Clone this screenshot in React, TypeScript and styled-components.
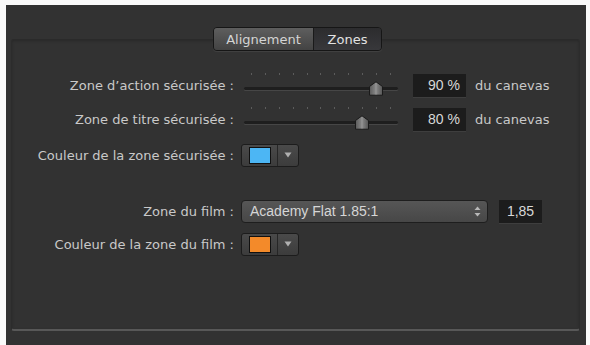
import styled, { createGlobalStyle } from 'styled-components';

const GlobalStyle = createGlobalStyle`
  html, body {
    margin: 0;
    padding: 0;
    background: #fafafa;
  }
  body {
    font-family: "Liberation Sans", Arial, Helvetica, sans-serif;
  }
`;

const Window = styled.div`
  margin: 5px 4px 0 6px;
  width: 580px;
  height: 340px;
  background: #323232;
  padding: 34px 6px 0 5px;
  box-sizing: border-box;
`;

const Panel = styled.div`
  position: relative;
  height: 292px;
  box-sizing: border-box;
  border-top: 1px solid #2a2a2a;
  border-left: 1px solid #2c2c2c;
  border-right: 1px solid #2c2c2c;
  border-bottom: 2px solid #585858;
  border-radius: 3px;
  background: #323232;
  box-shadow: inset 0 1px 3px rgba(0, 0, 0, 0.2);
  padding: 32px 0 0 0;
`;

const TabBar = styled.div`
  position: absolute;
  top: -13px;
  left: 201px;
  display: flex;
  height: 22px;
  border: 1px solid #161616;
  border-radius: 4px;
  overflow: hidden;
  box-shadow: 0 1px 1px rgba(255, 255, 255, 0.08);
`;

const Tab = styled.div<{ $active?: boolean }>`
  display: flex;
  align-items: center;
  justify-content: center;
  width: ${(p) => (p.$active ? '67px' : '99px')};
  font-family: "DejaVu Sans", sans-serif;
  font-size: 13px;
  color: ${(p) => (p.$active ? '#e2e2e2' : '#d4d4d4')};
  background: ${(p) =>
    p.$active
      ? 'linear-gradient(#2c2c2e, #38383b)'
      : 'linear-gradient(#5e5e5e, #434343)'};
  & + & {
    border-left: 1px solid #1a1a1a;
  }
`;

const Row = styled.div<{ $h: number; $gap: number }>`
  display: grid;
  grid-template-columns: 222px auto;
  column-gap: 7px;
  align-items: center;
  height: ${(p) => p.$h}px;
  margin-bottom: ${(p) => p.$gap}px;
`;

const Label = styled.div`
  text-align: right;
  font-family: "DejaVu Sans", sans-serif;
  font-size: 13px;
  color: #c9c9c9;
  white-space: nowrap;
`;

const Controls = styled.div`
  display: flex;
  align-items: center;
`;

const SliderBox = styled.div`
  position: relative;
  width: 154px;
  height: 26px;
  margin-left: 3px;
`;

const Ticks = styled.div`
  position: absolute;
  top: 1px;
  left: 7px;
  right: 7px;
  display: flex;
  justify-content: space-between;
`;

const Tick = styled.span`
  width: 1px;
  height: 2px;
  background: #5c5c5c;
`;

const Track = styled.div`
  position: absolute;
  top: 15px;
  left: 0;
  right: 0;
  height: 3px;
  border-radius: 2px;
  background: #1e1e1e;
  box-shadow: 0 1px 0 rgba(255, 255, 255, 0.1);
`;

const Thumb = styled.svg`
  position: absolute;
  top: 9px;
`;

const ValueBox = styled.div<{ $w: number }>`
  width: ${(p) => p.$w}px;
  height: 23px;
  box-sizing: border-box;
  background: #1c1c1c;
  color: #d8d8d8;
  font-size: 14px;
  display: flex;
  align-items: center;
  justify-content: flex-end;
  padding-right: 6px;
  box-shadow: 0 1px 0 rgba(255, 255, 255, 0.06);
`;

const SideText = styled.span`
  font-family: "DejaVu Sans", sans-serif;
  font-size: 13px;
  color: #c9c9c9;
  margin-left: 9px;
`;

const ColorWell = styled.div`
  display: flex;
  width: 58px;
  height: 23px;
  box-sizing: border-box;
  border: 1px solid #1c1c1c;
  border-radius: 3px;
  background: linear-gradient(#4a4a4a, #3c3c3c);
  overflow: hidden;
`;

const SwatchCell = styled.div`
  width: 35px;
  display: flex;
  align-items: center;
  justify-content: center;
  border-right: 1px solid #262626;
`;

const Swatch = styled.div<{ $color: string }>`
  width: 20px;
  height: 15px;
  background: ${(p) => p.$color};
  border: 1px solid #111;
`;

const ArrowCell = styled.div`
  flex: 1;
  display: flex;
  align-items: center;
  justify-content: center;
`;

const Popup = styled.div`
  display: flex;
  align-items: center;
  justify-content: space-between;
  width: 247px;
  height: 23px;
  box-sizing: border-box;
  border: 1px solid #1e1e1e;
  border-radius: 4px;
  background: linear-gradient(#565656, #474747);
  color: #d6d6d6;
  font-size: 14px;
  padding: 0 6px 0 8px;
  margin-right: 11px;
`;

const RatioBox = styled(ValueBox)`
  justify-content: center;
  padding-right: 0;
`;

function Slider({ value }: { value: number }) {
  const left = (value / 100) * (154 - 16);
  return (
    <SliderBox>
      <Ticks>
        {Array.from({ length: 11 }).map((_, i) => (
          <Tick key={i} />
        ))}
      </Ticks>
      <Track />
      <Thumb width="16" height="15" viewBox="0 0 16 15" style={{ left }}>
        <defs>
          <linearGradient id="thumbg" x1="0" y1="0" x2="1" y2="0">
            <stop offset="0" stopColor="#5a5a5a" />
            <stop offset="0.5" stopColor="#8a8a8a" />
            <stop offset="1" stopColor="#555" />
          </linearGradient>
        </defs>
        <path d="M1.5 5.5 L8 0.8 L14.5 5.5 L14.5 14.2 L1.5 14.2 Z" fill="url(#thumbg)" stroke="#1a1a1a" strokeWidth="1" />
        <line x1="8" y1="2" x2="8" y2="13.5" stroke="#9a9a9a" strokeWidth="0.8" />
      </Thumb>
    </SliderBox>
  );
}

function DownArrow() {
  return (
    <svg width="8" height="6" viewBox="0 0 8 6">
      <path d="M0.5 0.5 L7.5 0.5 L4 5.5 Z" fill="#b0b0b0" />
    </svg>
  );
}

function Stepper() {
  return (
    <svg width="7" height="11" viewBox="0 0 7 11">
      <path d="M3.5 0.5 L6.5 4 L0.5 4 Z" fill="#b8b8b8" />
      <path d="M3.5 10.5 L6.5 7 L0.5 7 Z" fill="#b8b8b8" />
    </svg>
  );
}

export default function App() {
  return (
    <>
      <GlobalStyle />
      <Window>
        <Panel>
          <TabBar>
            <Tab>Alignement</Tab>
            <Tab $active>Zones</Tab>
          </TabBar>

          <Row $h={26} $gap={8}>
            <Label>Zone d’action sécurisée :</Label>
            <Controls>
              <Slider value={90} />
              <div style={{ width: 15 }} />
              <ValueBox $w={53}>90 %</ValueBox>
              <SideText>du canevas</SideText>
            </Controls>
          </Row>

          <Row $h={26} $gap={11}>
            <Label>Zone de titre sécurisée :</Label>
            <Controls>
              <Slider value={80} />
              <div style={{ width: 15 }} />
              <ValueBox $w={53}>80 %</ValueBox>
              <SideText>du canevas</SideText>
            </Controls>
          </Row>

          <Row $h={24} $gap={32}>
            <Label>Couleur de la zone sécurisée :</Label>
            <Controls>
              <ColorWell>
                <SwatchCell>
                  <Swatch $color="#4cb6f4" />
                </SwatchCell>
                <ArrowCell>
                  <DownArrow />
                </ArrowCell>
              </ColorWell>
            </Controls>
          </Row>

          <Row $h={24} $gap={9}>
            <Label>Zone du film :</Label>
            <Controls>
              <Popup>
                <span>Academy Flat 1.85:1</span>
                <Stepper />
              </Popup>
              <RatioBox $w={43}>1,85</RatioBox>
            </Controls>
          </Row>

          <Row $h={24} $gap={0}>
            <Label>Couleur de la zone du film :</Label>
            <Controls>
              <ColorWell>
                <SwatchCell>
                  <Swatch $color="#f38a2a" />
                </SwatchCell>
                <ArrowCell>
                  <DownArrow />
                </ArrowCell>
              </ColorWell>
            </Controls>
          </Row>
        </Panel>
      </Window>
    </>
  );
}
